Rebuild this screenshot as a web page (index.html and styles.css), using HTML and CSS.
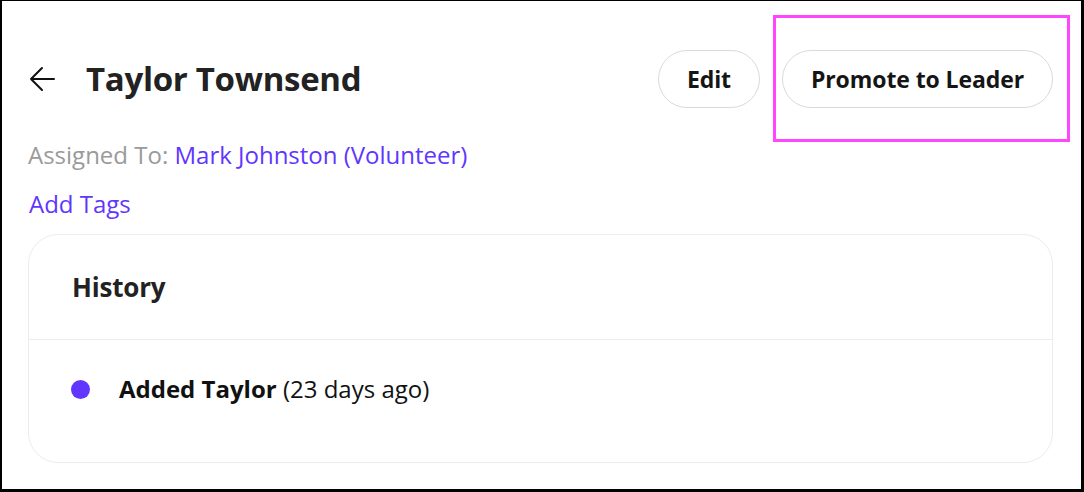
FILE: index.html
```html
<!DOCTYPE html>
<html>
<head>
<meta charset="utf-8">
<link rel="stylesheet" href="styles.css">
</head>
<body>
<div class="frame">
  <header class="head">
    <div class="title-group">
      <svg class="back" width="26" height="26" viewBox="0 0 26 26"><path d="M25 13H2M13 2L2 13l11 11" fill="none" stroke="#111" stroke-width="2" stroke-linecap="round" stroke-linejoin="round"/></svg>
      <h1 class="title">Taylor Townsend</h1>
    </div>
    <div class="actions">
      <button class="pill">Edit</button>
      <button class="pill">Promote to Leader</button>
    </div>
  </header>
  <div class="highlight"></div>
  <p class="assigned"><span class="muted">Assigned To:</span> <a class="link">Mark Johnston (Volunteer)</a></p>
  <p class="tags"><a class="link">Add Tags</a></p>
  <section class="card">
    <div class="card-head">History</div>
    <div class="card-body">
      <div class="event"><span class="dot"></span><span><b>Added Taylor</b> (23 days ago)</span></div>
    </div>
  </section>
</div>
</body>
</html>
```
FILE: styles.css
```css
html, body { margin: 0; padding: 0; background: #fff; }
body { font-family: "Open Sans", "Noto Sans", sans-serif; color: #1c1c1c; }
.frame {
  position: relative;
  box-sizing: border-box;
  width: 1084px; height: 492px;
  border-style: solid; border-color: #000;
  border-width: 1px 3px 3px 2px;
  padding: 0 28px 0 26px;
}
.head {
  display: flex; align-items: center; justify-content: space-between;
  height: 58px; margin-top: 49px;
}
.title-group { display: flex; align-items: center; }
.back { margin-left: 1px; margin-right: 31px; }
.title { margin: 0; font-size: 33px; font-weight: 700; letter-spacing: -0.3px; color: #222; line-height: 40px; }
.actions { display: flex; gap: 22px; }
.pill {
  height: 58px; border: 1px solid #dadada; border-radius: 29px; background: #fff;
  font-family: inherit; font-size: 23px; font-weight: 700; color: #151515;
  padding: 0 28px; letter-spacing: -0.1px;
}
.highlight {
  position: absolute; left: 771px; top: 14px; width: 297px; height: 127px;
  box-sizing: border-box; border: 3px solid #ff45ff;
}
.assigned { margin: 31px 0 0 0; font-size: 24px; line-height: 32px; }
.muted { color: #9a9a9a; }
.link { color: #6036ff; }
.tags { margin: 17px 0 0 1px; font-size: 24px; line-height: 32px; }
.card {
  margin-top: 14px; border: 1px solid #ececec; border-radius: 30px; height: 229px; box-sizing: border-box;
}
.card-head {
  height: 104px; display: flex; align-items: center; padding-left: 43px;
  font-size: 26px; font-weight: 700; border-bottom: 1px solid #ececec; color: #222; letter-spacing: -0.2px;
}
.card-body { padding: 33px 0 0 42px; }
.event { display: flex; align-items: center; font-size: 24px; line-height: 32px; color: #111; }
.dot { width: 19px; height: 19px; border-radius: 50%; background: #6236ff; margin-right: 29px; }
.event b { font-weight: 700; }
```
